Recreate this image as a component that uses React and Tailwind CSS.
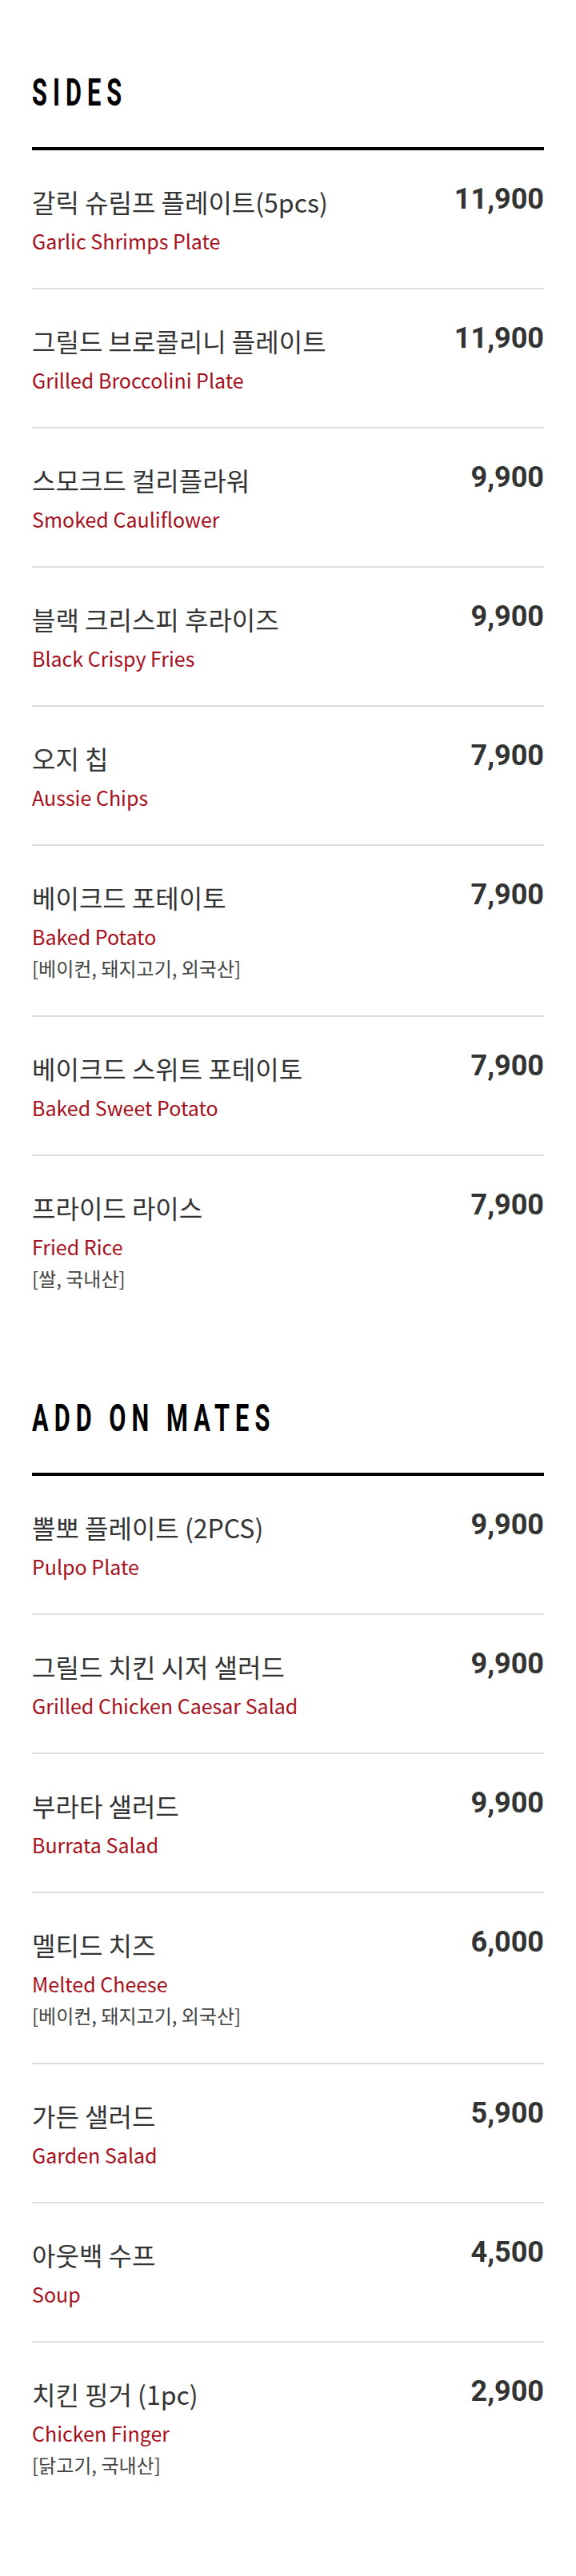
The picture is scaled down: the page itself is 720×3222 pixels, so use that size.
import React from 'react';

const sides = [
  { ko: '갈릭 슈림프 플레이트(5pcs)', en: 'Garlic Shrimps Plate', price: '11,900' },
  { ko: '그릴드 브로콜리니 플레이트', en: 'Grilled Broccolini Plate', price: '11,900' },
  { ko: '스모크드 컬리플라워', en: 'Smoked Cauliflower', price: '9,900' },
  { ko: '블랙 크리스피 후라이즈', en: 'Black Crispy Fries', price: '9,900' },
  { ko: '오지 칩', en: 'Aussie Chips', price: '7,900' },
  { ko: '베이크드 포테이토', en: 'Baked Potato', price: '7,900', origin: '[베이컨, 돼지고기, 외국산]' },
  { ko: '베이크드 스위트 포테이토', en: 'Baked Sweet Potato', price: '7,900' },
  { ko: '프라이드 라이스', en: 'Fried Rice', price: '7,900', origin: '[쌀, 국내산]' },
];

const addOns = [
  { ko: '뽈뽀 플레이트 (2PCS)', en: 'Pulpo Plate', price: '9,900' },
  { ko: '그릴드 치킨 시저 샐러드', en: 'Grilled Chicken Caesar Salad', price: '9,900' },
  { ko: '부라타 샐러드', en: 'Burrata Salad', price: '9,900' },
  { ko: '멜티드 치즈', en: 'Melted Cheese', price: '6,000', origin: '[베이컨, 돼지고기, 외국산]' },
  { ko: '가든 샐러드', en: 'Garden Salad', price: '5,900' },
  { ko: '아웃백 수프', en: 'Soup', price: '4,500' },
  { ko: '치킨 핑거 (1pc)', en: 'Chicken Finger', price: '2,900', origin: '[닭고기, 국내산]' },
];

const MenuItem = ({ item, first }) => (
  <li className={first ? '' : 'border-t-2 border-[#dcdcdc]'}>
    <div className="flex justify-between items-start pt-[41px] pb-[41px]">
      <div className="flex flex-col">
        <span className="text-[32px] leading-[46px] text-[#333]">{item.ko}</span>
        <span className="mt-[8px] text-[25px] leading-[36px] text-[#a50f1b]">{item.en}</span>
        {item.origin && (
          <span className="mt-[3px] text-[24px] leading-[37px] text-[#444]">{item.origin}</span>
        )}
      </div>
      <span className="font-['Roboto',sans-serif] font-bold text-[36px] leading-[40px] text-[#333]">
        {item.price}
      </span>
    </div>
  </li>
);

// no condensed face installed, so squeeze Roboto bold and open up the tracking
const MenuSection = ({ title, items }) => (
  <section className="pt-[92px]">
    <h2 className="origin-left scale-x-[0.64] whitespace-nowrap font-['Roboto',sans-serif] font-bold text-[48px] leading-[47px] tracking-[11px] text-black">
      {title}
    </h2>
    <div className="mt-[45px] h-[4px] bg-black" />
    <ul>
      {items.map((item, i) => (
        <MenuItem key={item.en} item={item} first={i === 0} />
      ))}
    </ul>
  </section>
);

export default function App() {
  return (
    <div className="w-[720px] bg-white px-[40px] pb-[80px] font-['Noto_Sans_CJK_KR','Noto_Sans',sans-serif]">
      <MenuSection title="SIDES" items={sides} />
      <MenuSection title="ADD ON MATES" items={addOns} />
    </div>
  );
}
